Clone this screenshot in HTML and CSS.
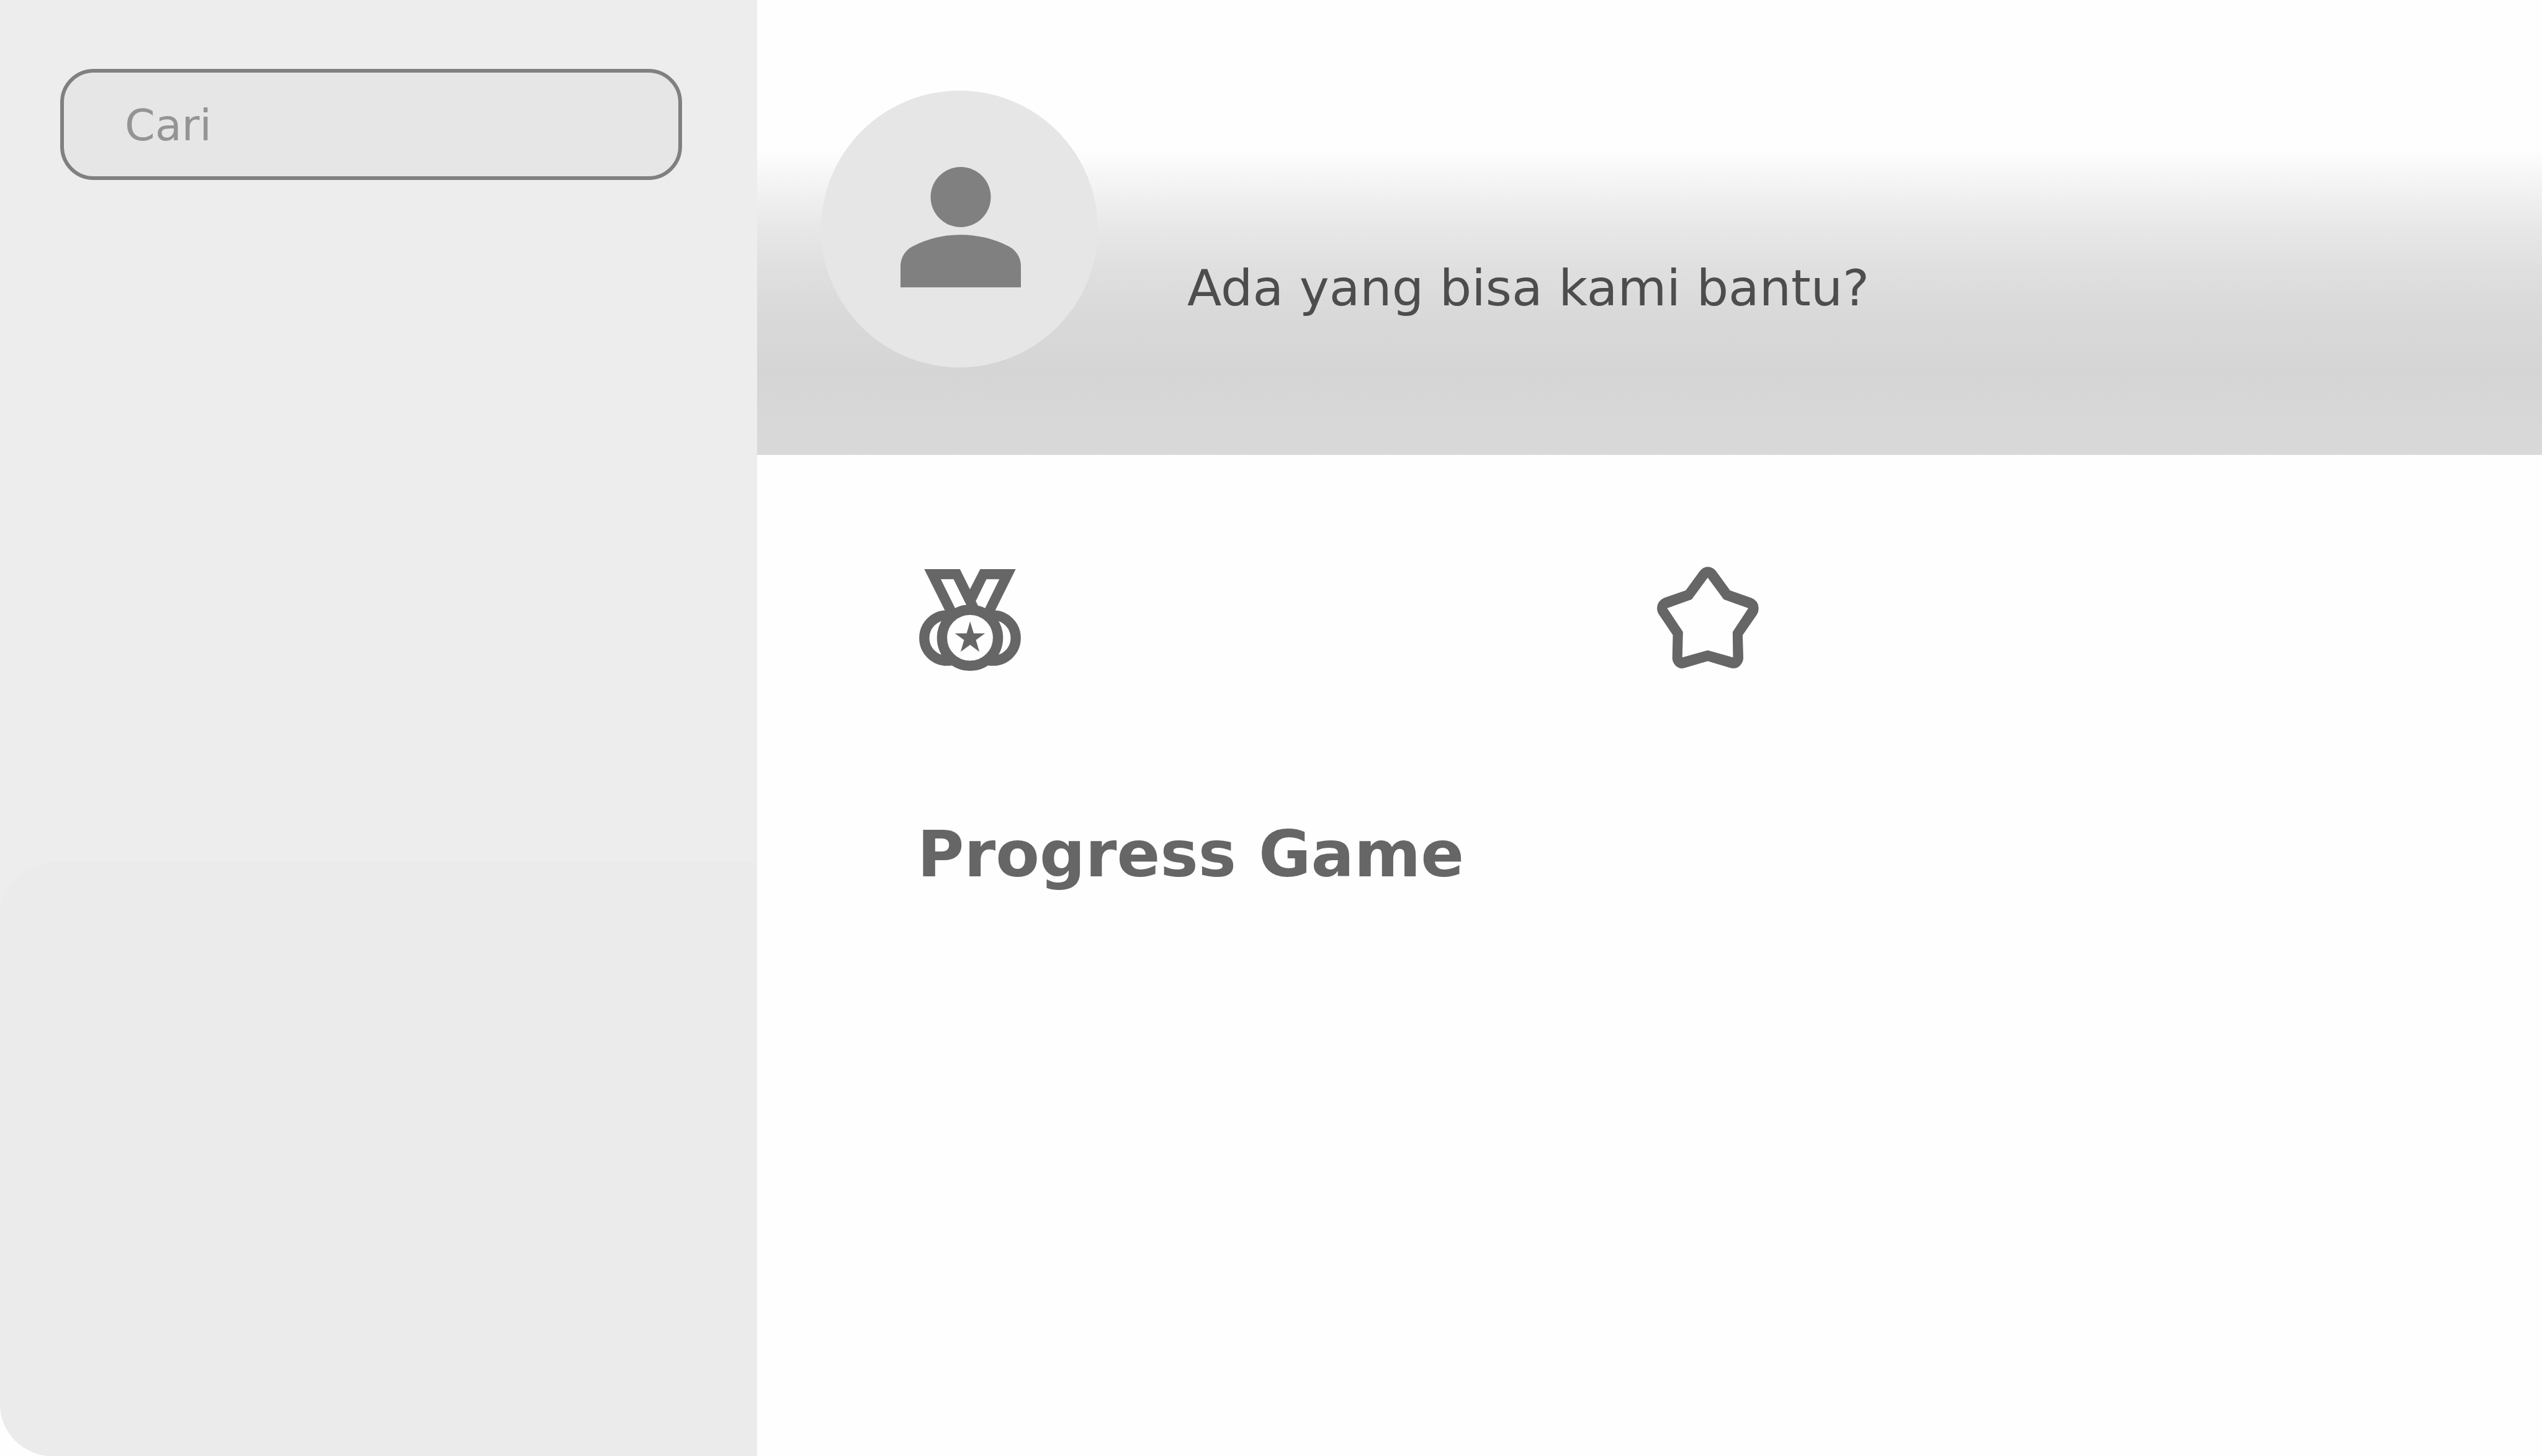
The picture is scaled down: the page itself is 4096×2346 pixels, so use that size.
FILE: index.html
```html
<!DOCTYPE html>
<html lang="id">
<head>
<meta charset="utf-8">
<meta name="viewport" content="width=device-width, initial-scale=1">
<title>Progress Game</title>
<link rel="stylesheet" href="styles.css">
</head>
<body>
<div class="app">
  <aside class="sidebar">
    <form class="search" role="search">
      <input class="search-input" type="search" placeholder="Cari" aria-label="Cari">
    </form>
    <div class="sidebar-panel"></div>
  </aside>
  <main class="main">
    <header class="banner">
      <div class="avatar">
        <svg class="avatar-icon" viewBox="4 4 16 16" aria-hidden="true">
          <circle cx="12" cy="8" r="4"/>
          <path d="M4 20V17.2Q4 16.35 4.4375 15.6375T5.6 14.55Q7.15 13.775 8.75 13.3875T12 13Q13.65 13 15.25 13.3875T18.4 14.55Q19.125 14.925 19.5625 15.6375T20 17.2V20Z"/>
        </svg>
      </div>
      <p class="greeting">Ada yang bisa kami bantu?</p>
    </header>
    <section class="content">
      <div class="badges">
        <svg class="badge" viewBox="120 112 591 605" aria-hidden="true">
          <path fill-rule="evenodd" d="M150 126H357L415 243L475 126H681L563 364L415 525L269 365ZM246 185L329 353Q360 336 394 334L320 185ZM511 185L449 312L462 339Q484 343 503 353L586 185Z"/>
          <circle class="ring" cx="282" cy="526" r="132"/>
          <circle class="ring" cx="549" cy="526" r="132"/>
          <circle class="ring" cx="415.5" cy="525" r="162.5"/>
          <path d="M416 430L437 499H503L450 538L470 606L416 566L361 606L381 538L328 499H396Z"/>
        </svg>
        <svg class="badge" viewBox="115 111 592 605" aria-hidden="true">
          <path fill-rule="evenodd" d="M410 111Q438 111 457 135L540 248L665 293Q706 310 706 352Q706 374 696 389L613 509L617 642Q617 665 599 684Q583 702 557 702Q548 702 539 699L410 660L281 698Q271 702 262 702Q238 702 221 684Q204 665 204 642L207 508L126 388Q115 372 115 350Q117 310 157 292L282 248L365 135Q384 111 410 111ZM410 174L317 301L174 352L266 490L262 638L410 597L557 638L555 490L646 352L503 301Z"/>
        </svg>
      </div>
      <h1 class="title">Progress Game</h1>
    </section>
  </main>
</div>
</body>
</html>
```
FILE: styles.css
```css
* {
  box-sizing: border-box;
}

body {
  margin: 0;
  background: #fefefe;
  font-family: "DejaVu Sans", Verdana, sans-serif;
}

.app {
  display: grid;
  grid-template-columns: 1220px 1fr;
  min-height: 100vh;
}

.sidebar {
  display: flex;
  flex-direction: column;
  background: #ededed;
  border-bottom-left-radius: 84px;
}

.search {
  height: 1390px;
  padding: 111px 121px 0 97px;
}

.search-input {
  display: block;
  width: 100%;
  height: 179px;
  padding: 2px 98px 0;
  border: 6px solid #808080;
  border-radius: 54px;
  background: #e6e6e6;
  color: #4d4d4d;
  font-family: inherit;
  font-size: 70px;
  appearance: none;
  outline: none;
}

.search-input::placeholder {
  color: #949494;
  opacity: 1;
}

.sidebar-panel {
  flex: 1;
  border-radius: 84px 0 0 84px;
  background: #ebebeb;
}

.banner {
  display: flex;
  align-items: flex-end;
  gap: 144px;
  padding: 146px 0 141px 103px;
  background: linear-gradient(#fefefe 240px, #f3f3f3 300px, #e7e7e7 370px, #dfdfdf 437px, #dadada 493px, #d7d7d7 550px, #d5d5d5 600px, #d9d9d9 733px);
}

.avatar {
  display: grid;
  place-items: center;
  flex: none;
  width: 446px;
  height: 446px;
  padding: 0 0 6px 4px;
  border-radius: 50%;
  background: #e6e6e6;
}

.avatar-icon {
  width: 194px;
  height: 194px;
  fill: #808080;
}

.greeting {
  margin: 0;
  padding-bottom: 80px;
  color: #4d4d4d;
  font-size: 81px;
  line-height: 96px;
}

.content {
  padding: 180px 237px 0 258px;
}

.badges {
  display: grid;
  grid-template-columns: repeat(2, 1fr);
  padding-left: 3px;
}

.badge {
  width: 164px;
  height: 168px;
  fill: #666666;
}

.ring {
  fill: #fefefe;
  stroke: #666666;
  stroke-width: 59px;
}

.title {
  margin: 235px 0 0;
  color: #666666;
  font-size: 103px;
  font-weight: 700;
  line-height: 120px;
}
```
